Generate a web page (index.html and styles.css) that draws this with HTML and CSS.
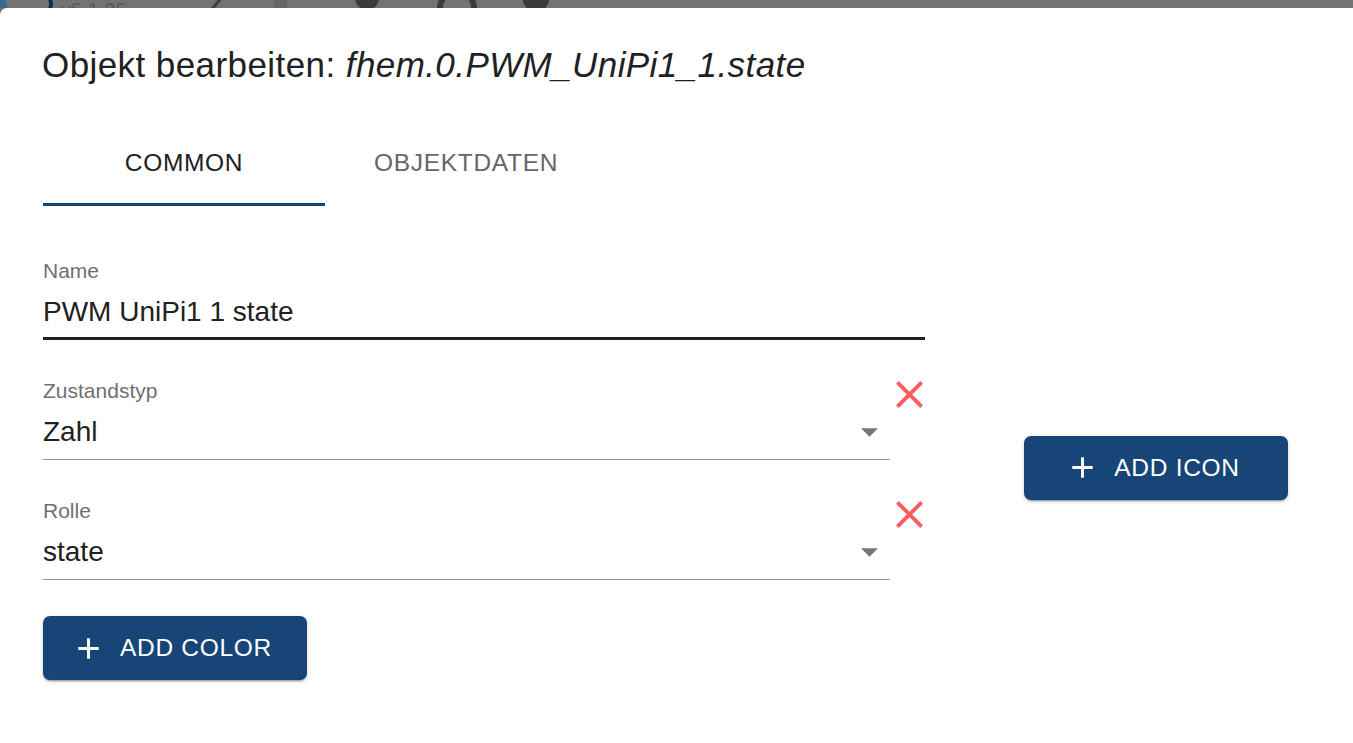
FILE: index.html
```html
<!DOCTYPE html>
<html lang="de">
<head>
    <meta charset="UTF-8">
    <meta name="viewport" content="width=device-width, initial-scale=1.0">
    <title>Objekt bearbeiten</title>
    <link rel="stylesheet" href="styles.css">
</head>
<body>
    <!-- Top of the app, dimmed by the dialog backdrop -->
    <div class="topbar">
        <span class="tb-edge"></span>
        <span class="tb-logo"></span>
        <span class="tb-version">v5.1.25</span>
        <span class="tb-slash"></span>
        <span class="tb-block"></span>
        <span class="tb-icon tb-icon-a"></span>
        <span class="tb-icon tb-icon-b"></span>
        <span class="tb-icon tb-icon-c"></span>
    </div>

    <div class="dialog">
        <h2 class="dialog-title">Objekt bearbeiten: <i>fhem.0.PWM_UniPi1_1.state</i></h2>

        <div class="tabs">
            <div class="tab active">COMMON</div>
            <div class="tab">OBJEKTDATEN</div>
        </div>

        <div class="content">
            <div class="fields">
                <div class="field name-field">
                    <label class="field-label">Name</label>
                    <div class="field-input focused">PWM UniPi1 1 state</div>
                </div>

                <div class="select-row">
                    <div class="field select-field">
                        <label class="field-label">Zustandstyp</label>
                        <div class="field-input select-input">
                            <span>Zahl</span>
                            <svg class="drop-arrow" viewBox="7 10 10 5"><path d="M7 10l5 5 5-5z"/></svg>
                        </div>
                    </div>
                    <button class="clear-btn" aria-label="Zurücksetzen">
                        <svg viewBox="5 5 14 14"><path d="M19 6.41L17.59 5 12 10.59 6.41 5 5 6.41 10.59 12 5 17.59 6.41 19 12 13.41 17.59 19 19 17.59 13.41 12z"/></svg>
                    </button>
                </div>

                <div class="select-row">
                    <div class="field select-field">
                        <label class="field-label">Rolle</label>
                        <div class="field-input select-input">
                            <span>state</span>
                            <svg class="drop-arrow" viewBox="7 10 10 5"><path d="M7 10l5 5 5-5z"/></svg>
                        </div>
                    </div>
                    <button class="clear-btn" aria-label="Zurücksetzen">
                        <svg viewBox="5 5 14 14"><path d="M19 6.41L17.59 5 12 10.59 6.41 5 5 6.41 10.59 12 5 17.59 6.41 19 12 13.41 17.59 19 19 17.59 13.41 12z"/></svg>
                    </button>
                </div>

                <button class="add-btn color-btn">
                    <svg viewBox="0 0 24 24"><path d="M19 13h-6v6h-2v-6H5v-2h6V5h2v6h6v2z"/></svg>
                    ADD COLOR
                </button>
            </div>

            <div class="side">
                <button class="add-btn">
                    <svg viewBox="0 0 24 24"><path d="M19 13h-6v6h-2v-6H5v-2h6V5h2v6h6v2z"/></svg>
                    ADD ICON
                </button>
            </div>
        </div>
    </div>
</body>
</html>
```

FILE: styles.css
```css
:root {
    --primary-color: #174577;
    --text-color: #212121;
    --label-color: #707070;
    --backdrop: #737373;
    --danger: #ff5b5b;
}

body {
    margin: 0;
    padding: 0;
    font-family: 'Liberation Sans', Arial, sans-serif;
    background: var(--backdrop);
    color: var(--text-color);
    height: 100vh;
    overflow: hidden;
    display: flex;
    flex-direction: column;
}

/* Dimmed app header peeking above the dialog */
.topbar {
    height: 8px;
    flex-shrink: 0;
    display: flex;
    align-items: flex-start;
    overflow: hidden;
}

.tb-edge {
    width: 7px;
    height: 20px;
    background: #33698e;
    border-radius: 0 4px 4px 0;
}

.tb-logo {
    width: 20px;
    height: 20px;
    margin-left: 22px;
    margin-top: -6px;
    border-radius: 50%;
    border-right: 4px solid #0e2b47;
}

.tb-version {
    margin-left: 8px;
    font-size: 20px;
    line-height: 20px;
    color: #585858;
}

.tb-slash {
    width: 3px;
    height: 20px;
    margin-left: 86px;
    margin-top: -4px;
    background: #3f3f3f;
    transform: rotate(40deg);
}

.tb-block {
    width: 13px;
    height: 20px;
    margin-left: 58px;
    background: #676767;
}

.tb-icon {
    height: 20px;
    background: #3b3b3b;
}

.tb-icon-a {
    width: 24px;
    margin-left: 68px;
    margin-top: -10px;
    border-radius: 0 0 12px 12px;
}

.tb-icon-b {
    width: 28px;
    height: 28px;
    margin-left: 58px;
    margin-top: -12px;
    background: none;
    border: 6px solid #3b3b3b;
    border-radius: 50%;
}

.tb-icon-c {
    width: 26px;
    margin-left: 46px;
    margin-top: -10px;
    border-radius: 0 0 10px 10px;
}

/* Dialog */
.dialog {
    flex: 1;
    background: #fff;
    border-top-left-radius: 7px;
    padding: 0 0 0 43px;
}

.dialog-title {
    margin: 0;
    padding-top: 29px;
    margin-left: -1px;
    font-size: 35px;
    line-height: 56px;
    font-weight: 400;
    letter-spacing: 0.012em;
}

.tabs {
    display: flex;
    margin-top: 29px;
}

.tab {
    width: 282px;
    height: 84px;
    box-sizing: border-box;
    display: flex;
    align-items: center;
    justify-content: center;
    font-size: 24.5px;
    letter-spacing: 0.02857em;
    color: #666;
    border-bottom: 3px solid transparent;
}

.tab.active {
    color: var(--text-color);
    border-bottom-color: var(--primary-color);
}

/* Form area */
.content {
    display: flex;
    align-items: center;
    gap: 99px;
    margin-top: 53px;
}

.fields {
    width: 882px;
    display: flex;
    flex-direction: column;
}

.side {
    padding-bottom: 4px;
}

.field {
    display: flex;
    flex-direction: column;
}

.field-label {
    font-size: 21px;
    line-height: 24px;
    color: var(--label-color);
}

.field-input {
    margin-top: 11px;
    font-size: 28px;
    line-height: 36px;
    padding-bottom: 9px;
    border-bottom: 1px solid #8f8f8f;
}

.field-input.focused {
    padding-bottom: 7px;
    border-bottom: 3px solid var(--text-color);
}

.select-row {
    display: flex;
    align-items: flex-start;
    margin-top: 39px;
}

.select-field {
    width: 847px;
}

.select-input {
    display: flex;
    align-items: center;
    justify-content: space-between;
}

.drop-arrow {
    width: 17px;
    height: 9px;
    margin-right: 12px;
    margin-top: 1px;
    fill: #757575;
}

.clear-btn {
    margin: 1px 0 0 6px;
    padding: 0;
    border: none;
    background: none;
    width: 28px;
    height: 28px;
    cursor: pointer;
}

.clear-btn svg {
    display: block;
    width: 27px;
    height: 27px;
    fill: var(--danger);
}

.add-btn {
    width: 264px;
    height: 64px;
    display: flex;
    align-items: center;
    justify-content: center;
    border: none;
    border-radius: 7px;
    background: var(--primary-color);
    color: #fff;
    font-family: inherit;
    font-size: 24.5px;
    letter-spacing: 0.02857em;
    cursor: pointer;
    box-shadow: 0 3px 1px -2px rgba(0,0,0,0.2), 0 2px 2px 0 rgba(0,0,0,0.14), 0 1px 5px 0 rgba(0,0,0,0.12);
}

.add-btn svg {
    width: 35px;
    height: 35px;
    margin-left: -7px;
    margin-right: 14px;
    fill: #fff;
}

.color-btn {
    margin-top: 36px;
}
```
